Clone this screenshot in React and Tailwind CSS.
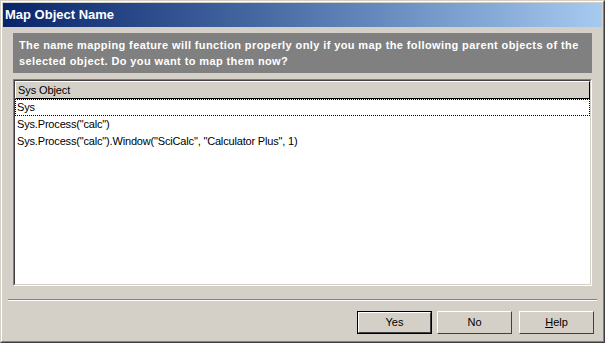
import React from 'react';

const rows = [
  'Sys',
  'Sys.Process("calc")',
  'Sys.Process("calc").Window("SciCalc", "Calculator Plus", 1)',
];

function Button({ children, isDefault }) {
  const face =
    'flex items-center justify-center border-t border-l border-t-white border-l-white border-r border-b border-r-[#404040] border-b-[#404040] text-[11px] text-black';
  if (isDefault) {
    return (
      <div className="border border-black">
        <div className={`${face} h-[21px] w-[73px]`}>{children}</div>
      </div>
    );
  }
  return <div className={`${face} h-[23px] w-[75px]`}>{children}</div>;
}

export default function App() {
  return (
    <div
      className="h-[343px] w-[605px] border border-t-[#d4d0c8] border-l-[#d4d0c8] border-r-[#404040] border-b-[#404040] bg-[#d4d0c8]"
      style={{ fontFamily: '"Liberation Sans", Arial, sans-serif' }}
    >
      <div className="flex h-full flex-col border border-t-white border-l-white border-r-[#808080] border-b-[#808080] p-[1px]">
        {/* title bar */}
        <div className="flex h-[24px] items-center bg-gradient-to-r from-[#0a246a] to-[#a6caf0] pl-[2px]">
          <span className="text-[13px] font-bold text-white">Map Object Name</span>
        </div>

        <div className="flex flex-1 flex-col px-[10px] pt-[6px]">
          {/* message */}
          <div className="h-[40px] bg-[#808080] px-[6px] pt-[4px] text-[11px] font-bold leading-[16px] tracking-[0.4px] text-white">
            The name mapping feature will function properly only if you map the following parent objects of the
            <br />
            selected object. Do you want to map them now?
          </div>

          {/* list */}
          <div className="mt-[6px] h-[207px] border border-t-[#808080] border-l-[#808080] border-r-white border-b-white">
            <div className="h-full border border-t-[#404040] border-l-[#404040] border-r-[#d4d0c8] border-b-[#d4d0c8] bg-white">
              <div className="border border-t-white border-l-white border-r-black border-b-black bg-[#d4d0c8]">
                <div className="flex h-[16px] items-center pl-[2px] text-[11px] tracking-[-0.1px] text-black">Sys Object</div>
              </div>
              <div>
                {rows.map((r, i) => (
                  <div
                    key={r}
                    className={`flex h-[17px] items-center pl-[1px] text-[11px] tracking-[-0.17px] text-black ${
                      i === 0 ? 'border border-dotted border-black' : 'border border-transparent'
                    }`}
                  >
                    {r}
                  </div>
                ))}
              </div>
            </div>
          </div>

          {/* separator */}
          <div className="mx-[-5px] mt-[13px] border-t border-b border-t-[#808080] border-b-white" />

          {/* buttons */}
          <div className="mt-[10px] mr-[-2px] flex justify-end gap-[5px]">
            <Button isDefault>Yes</Button>
            <Button>No</Button>
            <div className="ml-[2px]">
              <Button>
                <span>
                  <span className="underline">H</span>elp
                </span>
              </Button>
            </div>
          </div>
        </div>
      </div>
    </div>
  );
}
